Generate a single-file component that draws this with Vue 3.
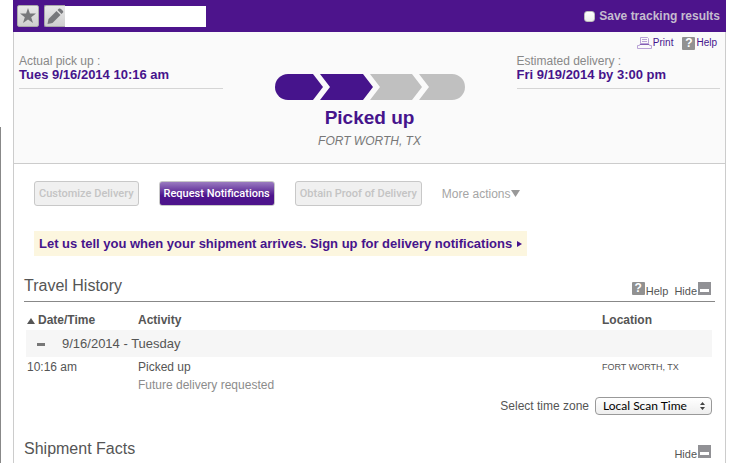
<script setup>
import { ref } from 'vue'

const steps = [
  { shape: 'M13 0H38L48 13L38 26H13A13 13 0 0 1 13 0Z', done: true },
  { shape: 'M45 0H88L98 13L88 26H45L55 13Z', done: true },
  { shape: 'M95 0H137L147 13L137 26H95L105 13Z', done: false },
  { shape: 'M144 0H177A13 13 0 0 1 177 26H144L154 13Z', done: false },
]
const saved = ref(false)
const nickname = ref('')
const zone = ref('local')
</script>

<template>
  <div class="page">
    <main class="panel">
      <header class="bar">
        <button class="tool" type="button" aria-label="Favorite">
          <svg width="16" height="16" viewBox="0 0 16 16"><path d="M8 0L9.9 5.6H16L11.2 9.2L13 15L8 11.5L3 15L4.800 9.200L0 5.600H6.100Z" fill="#77787b" /></svg>
        </button>
        <div class="nick">
          <button class="tool pencil" type="button" aria-label="Edit">
            <svg width="17" height="17" viewBox="0 0 17 17"><path d="M0.500 16L1.500 11L9.500 3L13.500 7L5.500 15ZM10.500 2L12 0.600Q13 0 14 1L16 3Q16.600 4 16 4.600L14.500 6Z" fill="#77787b" /></svg>
          </button>
          <input v-model="nickname" class="name" type="text" aria-label="Nickname" />
        </div>
        <label class="save"><input v-model="saved" type="checkbox" />Save tracking results</label>
      </header>

      <section class="status">
        <nav class="utils">
          <a href="#print">
            <svg width="15" height="12" viewBox="0 0 15 12" fill="none" stroke="#b9a3d6"><path d="M3.500 6.500V0.500H10.500L11.500 1.500V6.500M5 2.500H10M5 4.500H10M0.500 11.500V8.500H2.500L3.500 6.500H11.500L12.500 8.500H14.500V11.500Z" /><path d="M3 7.500H12" stroke="#8560b4" /></svg>Print</a>
          <a href="#help"><span class="q">?</span>Help</a>
        </nav>
        <div class="summary">
          <div class="when"><span>Actual pick up :</span><strong>Tues 9/16/2014 10:16 am</strong></div>
          <div class="progress">
            <svg width="190" height="26" viewBox="0 0 190 26">
              <path v-for="(s, i) in steps" :key="i" :d="s.shape" :fill="s.done ? '#46148c' : '#c0c0c0'" />
            </svg>
            <h1>Picked up</h1>
            <em>FORT WORTH, TX</em>
          </div>
          <div class="when"><span>Estimated delivery :</span><strong>Fri 9/19/2014 by 3:00 pm</strong></div>
        </div>
      </section>

      <div class="actions">
        <button class="btn" type="button" disabled>Customize Delivery</button>
        <button class="btn primary" type="button">Request Notifications</button>
        <button class="btn" type="button" disabled>Obtain Proof of Delivery</button>
        <button class="more" type="button">More actions<svg width="9" height="7" viewBox="0 0 9 7"><path d="M0 0H9L4.500 7Z" fill="#999" /></svg></button>
      </div>

      <a class="notice" href="#notifications">Let us tell you when your shipment arrives. Sign up for delivery notifications<svg width="5" height="6" viewBox="0 0 5 6"><path d="M0 0L5 3L0 6Z" fill="#46148c" /></svg></a>

      <section class="block">
        <div class="head">
          <h2>Travel History</h2>
          <a href="#history-help"><span class="q">?</span>Help</a>
          <button class="hide" type="button">Hide<i class="min"></i></button>
        </div>
        <div class="body">
          <table>
            <thead>
              <tr>
                <th class="date"><svg width="8" height="6" viewBox="0 0 8 6"><path d="M4 0L8 6H0Z" fill="#555" /></svg>Date/Time</th>
                <th>Activity</th>
                <th class="place">Location</th>
              </tr>
            </thead>
            <tbody>
              <tr class="day"><td colspan="3"><i class="dash"></i>9/16/2014 - Tuesday</td></tr>
              <tr class="event">
                <td>10:16 am</td>
                <td>Picked up<span class="note">Future delivery requested</span></td>
                <td class="city">FORT WORTH, TX</td>
              </tr>
            </tbody>
          </table>
          <div class="zone">
            <label for="zone">Select time zone</label>
            <div class="pick">
              <select id="zone" v-model="zone"><option value="local">Local Scan Time</option></select>
              <svg class="arrows" width="5" height="8" viewBox="0 0 5 8"><path d="M0 3L2.500 0L5 3ZM0 5H5L2.500 8Z" fill="#444" /></svg>
            </div>
          </div>
        </div>
      </section>

      <section class="block facts">
        <div class="head">
          <h2>Shipment Facts</h2>
          <button class="hide" type="button">Hide<i class="min"></i></button>
        </div>
      </section>
    </main>
  </div>
</template>

<style>
body {
  background: #fff;
  overflow: hidden;
}
</style>

<style scoped>
.page {
  padding: 0 5px 0 13px;
  font: 13px/16px "Liberation Sans", Arial, sans-serif;
  color: #555;
  background: linear-gradient(#888, #888) 0 127px / 1px 100% no-repeat;
}
.page *,
.page *::before {
  box-sizing: border-box;
}
button,
input,
select {
  font: inherit;
  margin: 0;
}
button {
  padding: 0;
  border: 0;
  background: none;
  color: inherit;
}
a {
  color: inherit;
  text-decoration: none;
}
svg {
  flex: none;
}
.panel {
  border: solid #ccc;
  border-width: 0 1px;
}
.bar {
  display: flex;
  align-items: center;
  gap: 5px;
  height: 32px;
  margin: 0 -1px;
  padding: 0 6px 0 4px;
  background: #4d148c;
}
.tool {
  display: flex;
  align-items: center;
  justify-content: center;
  width: 22px;
  height: 22px;
  border: 1px solid #aaa;
  border-radius: 2px;
  background: linear-gradient(#e8e8e8, #cfcfcf);
}
.nick {
  display: flex;
  align-items: center;
}
.pencil {
  width: 21px;
  border-right: 0;
  border-radius: 2px 0 0 2px;
}
.name {
  width: 141px;
  height: 21px;
  padding: 0 4px;
  border: 0;
  background: #fff;
}
.save {
  display: flex;
  align-items: center;
  gap: 4px;
  margin-left: auto;
  color: #c5bccf;
  font-size: 12px;
  font-weight: bold;
}
.save input {
  appearance: none;
  width: 11px;
  height: 11px;
  border: 1px solid #bbb;
  border-radius: 3px;
  background: linear-gradient(#fff, #eee);
}
.status {
  padding: 0 5px 15px;
  border-bottom: 1px solid #ccc;
  background: #fafafa;
}
.utils {
  display: flex;
  justify-content: flex-end;
  gap: 9px;
  height: 22px;
  padding-right: 3px;
  color: #46148c;
  font-size: 10px;
  line-height: 22px;
}
.utils a {
  display: flex;
  align-items: center;
  gap: 1px;
}
.q {
  width: 13px;
  height: 13px;
  border-radius: 1px;
  background: #919191;
  color: #fff;
  font: bold 12px/13px "Liberation Sans", Arial, sans-serif;
  text-align: center;
}
.summary {
  display: grid;
  grid-template-columns: 1fr 190px 1fr;
  gap: 52px;
  align-items: start;
}
.when {
  display: flex;
  flex-direction: column;
  padding-bottom: 6px;
  border-bottom: 1px solid #d5d5d5;
  color: #888;
  font-size: 12px;
  line-height: 14px;
}
.when strong {
  color: #46148c;
  font-size: 13px;
}
.progress {
  display: flex;
  flex-direction: column;
  align-items: center;
  padding-top: 20px;
}
h1 {
  margin: 7px 0 5px;
  color: #46148c;
  font-size: 19px;
  line-height: 22px;
}
em {
  color: #777;
  font-size: 12px;
  line-height: 14px;
}
.actions {
  display: flex;
  align-items: center;
  gap: 20px;
  padding: 17px 20px 0;
}
.btn {
  height: 25px;
  padding: 0 4px;
  border: 1px solid #c8c8c8;
  border-radius: 3px;
  background: #f0f0f0;
  color: #c4c4c4;
  font: 500 11px/23px Roboto, "Liberation Sans", sans-serif;
  white-space: nowrap;
}
.primary {
  border-color: #c8c8c8;
  background: linear-gradient(#9a7bc0, #4d148c 60%);
  color: #fff;
}
.more {
  display: flex;
  align-items: center;
  color: #a5a5a5;
  font-size: 12px;
}
.notice {
  display: flex;
  align-items: center;
  gap: 5px;
  width: fit-content;
  height: 25px;
  margin: 25px 0 0 20px;
  padding: 0 5px;
  background: #fcf6df;
  color: #46148c;
  font-size: 13px;
  font-weight: bold;
}
.block {
  padding: 16px 10px 0;
}
.head {
  display: flex;
  align-items: flex-end;
  gap: 6px;
  padding: 0 4px 0 0;
  border-bottom: 1px solid #888;
  font-size: 11px;
  line-height: 14px;
}
h2 {
  margin: 0 auto 1px 0;
  color: #555;
  font-size: 16px;
  font-weight: normal;
  line-height: 28px;
}
.head a,
.hide {
  display: flex;
  align-items: flex-end;
  gap: 1px;
  padding-bottom: 3px;
}
.head .q,
.min {
  margin-bottom: 3px;
}
.min {
  display: flex;
  align-items: flex-end;
  width: 13px;
  height: 13px;
  padding: 3px 2px;
  background: #919195;
}
.min::before {
  content: "";
  flex: 1;
  height: 3px;
  background: #fff;
}
.body {
  padding: 9px 3px 0 2px;
}
table {
  width: 100%;
  border-collapse: collapse;
  table-layout: fixed;
  font-size: 12px;
  line-height: 18px;
}
th,
td {
  padding: 0;
  text-align: left;
  vertical-align: top;
}
th {
  height: 19px;
}
th svg {
  margin: 0 3px 0 1px;
}
.date {
  width: 112px;
}
.place {
  width: 110px;
}
.day td {
  height: 27px;
  padding-left: 11px;
  background: #f6f6f6;
  font-size: 13px;
  line-height: 27px;
}
.dash {
  display: inline-block;
  width: 8px;
  height: 3px;
  margin-right: 17px;
  vertical-align: middle;
  background: #777;
}
.event td {
  padding-top: 1px;
}
.event td:first-child {
  padding-left: 1px;
}
.note {
  display: block;
  color: #8c8c8c;
}
.event .city {
  font-size: 9px;
}
.zone {
  display: flex;
  align-items: center;
  justify-content: flex-end;
  gap: 6px;
  padding-top: 3px;
  font-size: 12px;
}
.pick {
  position: relative;
}
select {
  display: block;
  width: 117px;
  height: 18px;
  padding: 0 7px;
  appearance: none;
  border: 1px solid #999;
  border-radius: 4px;
  background: linear-gradient(#fff, #eee);
  color: #000;
  font: 12px/16px Lato, "Open Sans", sans-serif;
}
.arrows {
  position: absolute;
  top: 5px;
  right: 7px;
  pointer-events: none;
}
.facts {
  padding-top: 20px;
}
</style>
